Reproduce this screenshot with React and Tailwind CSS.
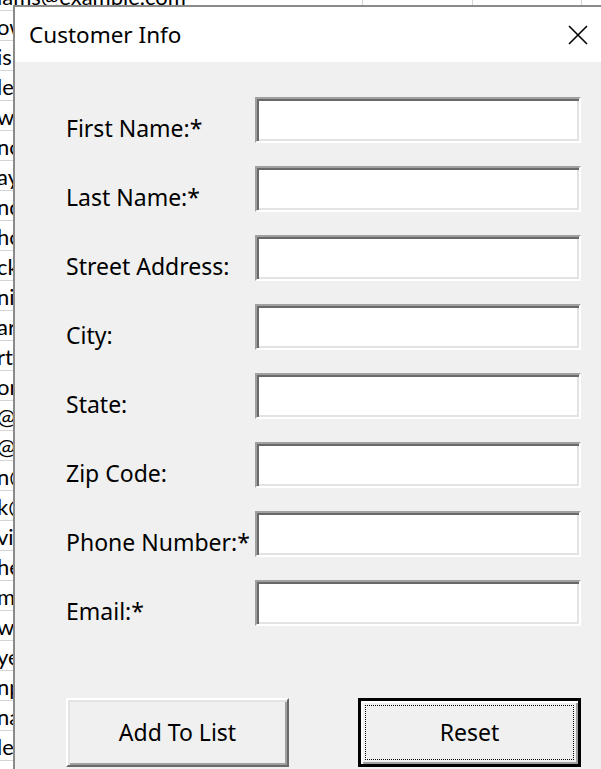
const sheetRows = [
  "iams@example.com",
  "ow",
  "is",
  "le",
  "w",
  "no",
  "ay",
  "nd",
  "ho",
  "ck",
  "nit",
  "arr",
  "rt",
  "on",
  "@e",
  "@e",
  "n@",
  "k@",
  "vi",
  "he",
  "m",
  "w",
  "ye",
  "np",
  "na",
  "le",
  "",
];

const fields = [
  "First Name:*",
  "Last Name:*",
  "Street Address:",
  "City:",
  "State:",
  "Zip Code:",
  "Phone Number:*",
  "Email:*",
];

function SheetRow({ text }) {
  return (
    <div className="flex h-[30px] border-b border-[#d4d4d4]">
      <div className="w-[363px] overflow-hidden whitespace-nowrap border-r border-[#d4d4d4] pt-[5px] text-[22px] leading-none">
        <span className="-ml-[3px] inline-block">{text}</span>
      </div>
      <div className="w-[110px] border-r border-[#d4d4d4]" />
      <div className="w-[109px] border-r border-[#d4d4d4]" />
      <div className="flex-1" />
    </div>
  );
}

function FieldRow({ label }) {
  return (
    <div className="flex items-start">
      <div className="w-[189px] whitespace-nowrap pt-[20px] text-[23px] leading-none text-black">{label}</div>
      <div className="h-[46px] w-[326px] border-2 border-t-[#a0a0a0] border-l-[#a0a0a0] border-r-white border-b-white bg-white shadow-[inset_2px_2px_0_#696969,inset_-2px_-2px_0_#e3e3e3]" />
    </div>
  );
}

export default function App() {
  return (
    <div className="relative h-[769px] w-full overflow-hidden bg-white font-['Lato',sans-serif] text-black">
      <div className="-mt-[19px]">
        {sheetRows.map((text, i) => (
          <SheetRow key={i} text={text} />
        ))}
      </div>

      <div className="absolute left-[13px] top-[5px] flex h-[800px] w-[600px] flex-col border-l-2 border-t-2 border-[#8a8a8a] font-['Noto_Sans',sans-serif]">
        <div className="flex h-[55px] items-center bg-white pl-[14px] pr-[25px]">
          <span className="pt-[2px] text-[22.5px] leading-none">Customer Info</span>
          <svg className="ml-auto" width="20" height="20" viewBox="0 0 20 20" fill="none" stroke="#000" strokeWidth="1.6">
            <path d="M1 1 L19 19 M19 1 L1 19" />
          </svg>
        </div>

        <div className="flex-1 bg-[#f0f0f0] pl-[51px] pt-[35px]">
          <div className="flex flex-col gap-[23px]">
            {fields.map((label) => (
              <FieldRow key={label} label={label} />
            ))}
          </div>

          <div className="mt-[72px] flex gap-[69px]">
            <button className="flex h-[69px] w-[223px] items-center justify-center border-2 border-t-white border-l-white border-r-[#696969] border-b-[#696969] bg-[#f0f0f0] text-[23px] leading-none shadow-[inset_2px_2px_0_#e3e3e3,inset_-2px_-2px_0_#a0a0a0]">
              Add To List
            </button>
            <button className="h-[69px] w-[223px] border-[3px] border-black bg-[#f0f0f0] p-[4px] shadow-[inset_2px_2px_0_#ffffff,inset_-2px_-2px_0_#a0a0a0]">
              <div className="flex h-full w-full items-center justify-center border border-dotted border-black text-[23px] leading-none">
                Reset
              </div>
            </button>
          </div>
        </div>
      </div>
    </div>
  );
}
